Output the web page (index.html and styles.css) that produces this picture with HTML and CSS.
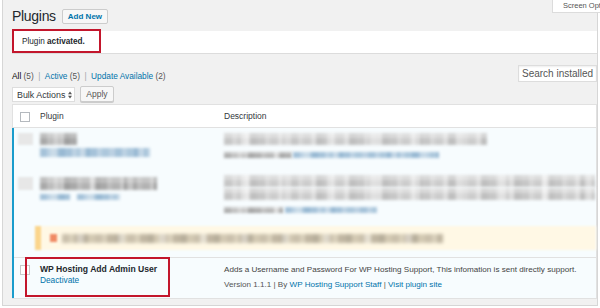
FILE: index.html
```html
<!DOCTYPE html>
<html lang="en">
<head>
<meta charset="utf-8">
<title>Plugins</title>
<link rel="stylesheet" href="styles.css">
</head>
<body>
<div class="frame">
  <div class="screen-tab">Screen Options</div>

  <div class="page-head">
    <h1 class="title">Plugins</h1>
    <a class="add-new">Add New</a>
  </div>

  <div class="notice">
    <p>Plugin <b>activated.</b></p>
    <span class="mark mark-notice"></span>
  </div>

  <div class="filter-row">
    <div class="filters"><a class="current">All</a> <span class="count">(5)</span><span class="sep">|</span><a>Active</a> <span class="count">(5)</span><span class="sep">|</span><a>Update Available</a> <span class="count">(2)</span></div>
    <div class="search">Search installed</div>
  </div>

  <div class="bulk-row">
    <div class="select"><span>Bulk Actions</span><svg class="arrows" width="4" height="8" viewBox="0 0 4 8"><path d="M0 3.2 L2 0.4 L4 3.2 Z M0 4.8 L2 7.6 L4 4.8 Z" fill="#555"/></svg></div>
    <button class="btn">Apply</button>
  </div>

  <div class="table">
    <div class="thead">
      <div class="h-check"><span class="cb"></span></div>
      <div class="h-name">Plugin</div>
      <div class="h-desc">Description</div>
    </div>
    <div class="tbody">
      <div class="row row1">
        <div class="c1"><span class="ph ph1"></span></div>
        <div class="c2">
          <span class="mz g r1-title"></span>
          <span class="mz b r1-links"></span>
        </div>
        <div class="c3">
          <span class="mz lg r1-desc"></span>
          <div class="meta r1-meta"><span class="mz g m-gray1"></span><span class="mz b m-blue1"></span></div>
        </div>
      </div>

      <div class="row row2">
        <div class="c1"><span class="ph ph2"></span></div>
        <div class="c2">
          <span class="mz g r2-title"></span>
          <div class="links2"><span class="mz b l2a"></span><span class="mz b l2b"></span></div>
        </div>
        <div class="c3">
          <span class="mz lg r2-desc first"></span>
          <span class="mz lg r2-desc"></span>
          <div class="meta r2-meta"><span class="mz g m-gray2"></span><span class="mz b m-blue2"></span></div>
        </div>
      </div>

      <div class="row row-update">
        <div class="update">
          <span class="upd-icon"></span>
          <span class="mz y upd-text"></span>
        </div>
      </div>

      <div class="row row-final">
        <div class="c1"><span class="cb cb-final"></span></div>
        <div class="c2">
          <div class="p-title">WP Hosting Add Admin User</div>
          <a class="p-link">Deactivate</a>
        </div>
        <div class="c3">
          <p class="p-desc">Adds a Username and Password For WP Hosting Support, This infomation is sent directly support.</p>
          <p class="p-meta">Version 1.1.1 | By <a>WP Hosting Support Staff</a> | <a>Visit plugin site</a></p>
        </div>
        <span class="mark mark-row"></span>
      </div>
    </div>
  </div>
</div>
</body>
</html>
```
FILE: styles.css
```css
* { box-sizing: border-box; }

html, body {
  margin: 0;
  padding: 0;
  overflow: hidden;
  background: #fff;
}

body {
  width: 600px;
  height: 308px;
  font-family: "Liberation Sans", Arial, sans-serif;
  color: #444;
}

a { text-decoration: none; color: #0073aa; }

.frame {
  position: relative;
  display: flow-root;
  margin-left: 2px;
  width: 596px;
  height: 306px;
  padding: 8px 0 0 9px;
  background: #f1f1f1;
  border: 1px solid #d6d6d6;
  border-top: none;
}

.screen-tab {
  position: absolute;
  top: 0;
  left: 549px;
  width: 70px;
  height: 13px;
  padding-left: 10px;
  background: #fff;
  border: 1px solid #dcdcdc;
  border-top: none;
  font-size: 7.5px;
  line-height: 12px;
  color: #555;
  white-space: nowrap;
  overflow: hidden;
}

/* page header */
.page-head {
  display: flex;
  align-items: center;
  gap: 6px;
  height: 17px;
}

.title {
  margin: 0;
  font-size: 14px;
  font-weight: 400;
  line-height: 17px;
  letter-spacing: -0.3px;
  color: #23282d;
}

.add-new {
  display: block;
  height: 15px;
  padding: 0 5px;
  background: #f7f7f7;
  border: 1px solid #ccc;
  border-radius: 2px;
  font-size: 8px;
  font-weight: 700;
  line-height: 13px;
  color: #0073aa;
}

/* notice */
.notice {
  position: relative;
  margin-top: 6px;
  height: 23px;
  padding-left: 10px;
  background: #fff;
  border-bottom: 1px solid #dcdcdc;
  font-size: 8.2px;
  line-height: 22px;
  color: #23282d;
}

.notice p { margin: 0; }

.mark {
  position: absolute;
  border: 2px solid #c3162c;
}

.mark-notice {
  left: 0;
  top: -2px;
  width: 89px;
  height: 24px;
}

/* filters + search */
.filter-row {
  display: flex;
  justify-content: space-between;
  align-items: flex-start;
  margin-top: 11px;
  height: 17px;
}

.filters {
  margin-top: 6px;
  font-size: 8.3px;
  line-height: 10px;
  color: #555;
  white-space: nowrap;
}

.filters a.current { color: #000; }

.sep {
  margin: 0 4.5px;
  color: #a0a5aa;
}

.search {
  width: 79px;
  height: 17px;
  padding-left: 3px;
  background: #fff;
  border: 1px solid #ddd;
  box-shadow: inset 0 1px 2px rgba(0, 0, 0, 0.07);
  font-size: 10px;
  line-height: 15px;
  color: #555;
  white-space: nowrap;
  overflow: hidden;
}

/* bulk actions */
.bulk-row {
  display: flex;
  align-items: flex-start;
  gap: 5px;
  margin-top: 4px;
  height: 16px;
}

.select {
  display: flex;
  align-items: center;
  justify-content: space-between;
  width: 63px;
  height: 15px;
  margin-top: 1px;
  padding: 0 2px 0 4px;
  background: #fff;
  border: 1px solid #ddd;
  font-size: 8.9px;
  color: #32373c;
}

.arrows { display: block; }

.btn {
  width: 34px;
  height: 16px;
  padding: 0;
  background: #f7f7f7;
  border: 1px solid #ccc;
  border-radius: 2px;
  box-shadow: 0 1px 0 #ccc;
  font-family: inherit;
  font-size: 8.5px;
  color: #555;
}

/* table */
.table {
  margin-top: 2px;
  background: #fff;
  border: 1px solid #e1e1e1;
  border-left: none;
}

.thead {
  display: flex;
  align-items: center;
  height: 23px;
  border-left: 1px solid #e1e1e1;
  border-bottom: 1px solid #e1e1e1;
  font-size: 8.5px;
  line-height: 11px;
  color: #32373c;
}

.h-check {
  width: 27px;
  flex: none;
  align-self: flex-start;
}

.h-name { width: 184px; flex: none; }

.cb {
  display: block;
  width: 10px;
  height: 10px;
  background: #fff;
  border: 1px solid #b4b9be;
}

.h-check .cb { margin: 7px 0 0 7px; }

.tbody {
  border-left: 2px solid #1a9ccc;
  background: #f7fcfe;
}

.row {
  position: relative;
  display: flex;
}

.c1 { width: 26px; flex: none; }
.c2 { width: 184px; flex: none; }
.c3 { flex: 1; min-width: 0; }

.row1 { height: 37px; }
.row2 { height: 56px; }
.row-update { height: 36px; }
.row-final {
  height: 41px;
  border-top: 1px solid #e1e1e1;
}

/* blurred (mosaic) content */
.mz {
  display: block;
  filter: blur(1.4px);
}

.mz.g {
  background:
    linear-gradient(180deg, rgba(255,255,255,0.25) 0 45%, rgba(255,255,255,0) 45% 100%),
    repeating-linear-gradient(90deg, rgba(255,255,255,0) 0 13px, rgba(255,255,255,0.35) 13px 19px, rgba(255,255,255,0) 19px 37px),
    repeating-linear-gradient(90deg, #a8a8a8 0 7px, #bdbdbd 7px 12px, #b2b2b2 12px 20px, #c8c8c8 20px 24px, #9f9f9f 24px 30px);
}

.mz.lg {
  background:
    linear-gradient(180deg, rgba(255,255,255,0.35) 0 40%, rgba(255,255,255,0) 40% 100%),
    repeating-linear-gradient(90deg, rgba(255,255,255,0) 0 17px, rgba(255,255,255,0.4) 17px 24px, rgba(255,255,255,0) 24px 43px),
    repeating-linear-gradient(90deg, #c6c6c6 0 8px, #d6d6d6 8px 13px, #cccccc 13px 21px, #dedede 21px 26px, #bfbfbf 26px 33px);
}

.mz.b {
  background:
    repeating-linear-gradient(90deg, rgba(255,255,255,0) 0 11px, rgba(255,255,255,0.35) 11px 17px, rgba(255,255,255,0) 17px 29px),
    repeating-linear-gradient(90deg, #a5c2d9 0 7px, #bcd2e3 7px 12px, #acc7dc 12px 19px, #98b9d3 19px 25px);
}

.mz.y {
  background:
    repeating-linear-gradient(90deg, rgba(255,255,255,0) 0 15px, rgba(255,255,255,0.35) 15px 22px, rgba(255,255,255,0) 22px 41px),
    repeating-linear-gradient(90deg, #c9bfab 0 7px, #dad1bc 7px 12px, #c0b6a2 12px 20px, #b7ae9b 20px 26px, #d3c9b3 26px 33px);
}

.ph {
  display: block;
  width: 15px;
  margin-left: 4px;
  background: #e7e7e7;
  filter: blur(1.2px);
}

.ph1 { height: 12px; margin-top: 5px; }
.ph2 { height: 13px; margin-top: 12px; }

.r1-title { width: 37px; height: 12px; margin-top: 5px; }
.r1-links { width: 110px; height: 9px; margin-top: 3px; }
.r1-desc { width: 263px; height: 12px; margin-top: 5px; }

.meta {
  display: flex;
  gap: 1px;
  height: 6px;
}

.r1-meta { margin-top: 7px; }
.m-gray1 { width: 68px; height: 6px; }
.m-blue1 { width: 146px; height: 6px; }

.r2-title { width: 117px; height: 13px; margin-top: 12px; }

.links2 {
  display: flex;
  gap: 7px;
  margin-top: 4px;
}

.l2a { width: 30px; height: 6px; }
.l2b { width: 43px; height: 6px; }

.r2-desc { width: 371px; height: 12px; margin-top: 1px; }
.r2-desc.first { margin-top: 10px; }
.r2-meta { margin-top: 7px; gap: 2px; }
.m-gray2 { width: 59px; height: 6px; }
.m-blue2 { width: 92px; height: 6px; }

/* update notice */
.update {
  display: flex;
  align-items: center;
  gap: 5px;
  flex: 1;
  height: 24px;
  margin: 5px 0 0 21px;
  padding-left: 9px;
  background: #fff8e5;
  border-left: 6px solid #fbd58c;
  filter: blur(1px);
}

.upd-icon {
  display: block;
  width: 7px;
  height: 8px;
  background: #f08a64;
}

.upd-text { width: 381px; height: 9px; }

/* final plugin row */
.cb-final {
  margin: 7px 0 0 6px;
  border-color: #c9c9c9;
}

.row-final .c2,
.row-final .c3 { padding-top: 6px; }

.p-title {
  font-size: 8.6px;
  font-weight: 700;
  line-height: 11px;
  color: #23282d;
  white-space: nowrap;
}

.p-link {
  display: block;
  font-size: 8.3px;
  line-height: 11px;
}

.p-desc {
  margin: 0 0 4px;
  font-size: 8.1px;
  line-height: 11px;
  color: #444;
  white-space: nowrap;
}

.p-meta {
  margin: 0;
  font-size: 8.1px;
  line-height: 11px;
  color: #555;
  white-space: nowrap;
}

.mark-row {
  left: 11px;
  top: -1px;
  width: 145px;
  height: 40px;
}
```
